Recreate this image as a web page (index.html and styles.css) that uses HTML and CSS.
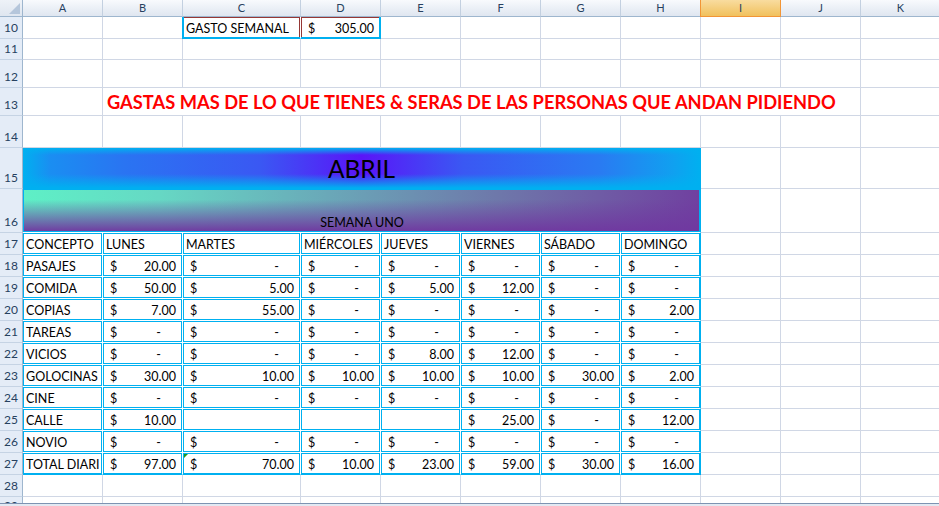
FILE: index.html
```html
<!DOCTYPE html>
<html lang="es">
<head>
<meta charset="utf-8">
<title>Gasto semanal</title>
<link rel="stylesheet" href="styles.css">
</head>
<body>
<div class="sheet">
  <div class="colhead">
    <div class="corner"></div>
    <div>A</div><div>B</div><div class="wc">C</div><div>D</div><div>E</div><div>F</div><div>G</div><div>H</div><div class="sel">I</div><div>J</div><div>K</div>
  </div>

  <div class="row"><div class="rh">10</div><div></div><div></div><div class="wc c10">GASTO SEMANAL</div><div class="a d10"><span>$</span><span>305.00</span></div><div></div><div></div><div></div><div></div><div></div><div></div><div></div></div>

  <div class="row h21"><div class="rh">11</div><div></div><div></div><div class="wc"></div><div></div><div></div><div></div><div></div><div></div><div></div><div></div><div></div></div>

  <div class="row h28"><div class="rh">12</div><div></div><div></div><div class="wc"></div><div></div><div></div><div></div><div></div><div></div><div></div><div></div><div></div></div>

  <div class="row h28"><div class="rh">13</div><div></div><div class="title">GASTAS MAS DE LO QUE TIENES &amp; SERAS DE LAS PERSONAS QUE ANDAN PIDIENDO</div><div></div></div>

  <div class="row h32"><div class="rh">14</div><div></div><div></div><div class="wc"></div><div></div><div></div><div></div><div></div><div></div><div></div><div></div><div></div></div>

  <div class="row h41"><div class="rh">15</div><div class="banner">ABRIL</div><div></div><div></div><div></div></div>

  <div class="row h44"><div class="rh">16</div><div class="t e week">SEMANA UNO</div><div></div><div></div><div></div></div>

  <div class="row"><div class="rh">17</div><div class="t">CONCEPTO</div><div class="t">LUNES</div><div class="t wc">MARTES</div><div class="t">MIÉRCOLES</div><div class="t">JUEVES</div><div class="t">VIERNES</div><div class="t">SÁBADO</div><div class="t e">DOMINGO</div><div></div><div></div><div></div></div>

  <div class="row"><div class="rh">18</div><div class="t">PASAJES</div>
    <div class="t a"><span>$</span><span>20.00</span></div>
    <div class="t a wc"><span>$</span><span class="z">-</span></div>
    <div class="t a"><span>$</span><span class="z">-</span></div>
    <div class="t a"><span>$</span><span class="z">-</span></div>
    <div class="t a"><span>$</span><span class="z">-</span></div>
    <div class="t a"><span>$</span><span class="z">-</span></div>
    <div class="t a e"><span>$</span><span class="z">-</span></div>
    <div></div><div></div><div></div></div>

  <div class="row"><div class="rh">19</div><div class="t">COMIDA</div>
    <div class="t a"><span>$</span><span>50.00</span></div>
    <div class="t a wc"><span>$</span><span>5.00</span></div>
    <div class="t a"><span>$</span><span class="z">-</span></div>
    <div class="t a"><span>$</span><span>5.00</span></div>
    <div class="t a"><span>$</span><span>12.00</span></div>
    <div class="t a"><span>$</span><span class="z">-</span></div>
    <div class="t a e"><span>$</span><span class="z">-</span></div>
    <div></div><div></div><div></div></div>

  <div class="row"><div class="rh">20</div><div class="t">COPIAS</div>
    <div class="t a"><span>$</span><span>7.00</span></div>
    <div class="t a wc"><span>$</span><span>55.00</span></div>
    <div class="t a"><span>$</span><span class="z">-</span></div>
    <div class="t a"><span>$</span><span class="z">-</span></div>
    <div class="t a"><span>$</span><span class="z">-</span></div>
    <div class="t a"><span>$</span><span class="z">-</span></div>
    <div class="t a e"><span>$</span><span>2.00</span></div>
    <div></div><div></div><div></div></div>

  <div class="row"><div class="rh">21</div><div class="t">TAREAS</div>
    <div class="t a"><span>$</span><span class="z">-</span></div>
    <div class="t a wc"><span>$</span><span class="z">-</span></div>
    <div class="t a"><span>$</span><span class="z">-</span></div>
    <div class="t a"><span>$</span><span class="z">-</span></div>
    <div class="t a"><span>$</span><span class="z">-</span></div>
    <div class="t a"><span>$</span><span class="z">-</span></div>
    <div class="t a e"><span>$</span><span class="z">-</span></div>
    <div></div><div></div><div></div></div>

  <div class="row"><div class="rh">22</div><div class="t">VICIOS</div>
    <div class="t a"><span>$</span><span class="z">-</span></div>
    <div class="t a wc"><span>$</span><span class="z">-</span></div>
    <div class="t a"><span>$</span><span class="z">-</span></div>
    <div class="t a"><span>$</span><span>8.00</span></div>
    <div class="t a"><span>$</span><span>12.00</span></div>
    <div class="t a"><span>$</span><span class="z">-</span></div>
    <div class="t a e"><span>$</span><span class="z">-</span></div>
    <div></div><div></div><div></div></div>

  <div class="row"><div class="rh">23</div><div class="t">GOLOCINAS</div>
    <div class="t a"><span>$</span><span>30.00</span></div>
    <div class="t a wc"><span>$</span><span>10.00</span></div>
    <div class="t a"><span>$</span><span>10.00</span></div>
    <div class="t a"><span>$</span><span>10.00</span></div>
    <div class="t a"><span>$</span><span>10.00</span></div>
    <div class="t a"><span>$</span><span>30.00</span></div>
    <div class="t a e"><span>$</span><span>2.00</span></div>
    <div></div><div></div><div></div></div>

  <div class="row"><div class="rh">24</div><div class="t">CINE</div>
    <div class="t a"><span>$</span><span class="z">-</span></div>
    <div class="t a wc"><span>$</span><span class="z">-</span></div>
    <div class="t a"><span>$</span><span class="z">-</span></div>
    <div class="t a"><span>$</span><span class="z">-</span></div>
    <div class="t a"><span>$</span><span class="z">-</span></div>
    <div class="t a"><span>$</span><span class="z">-</span></div>
    <div class="t a e"><span>$</span><span class="z">-</span></div>
    <div></div><div></div><div></div></div>

  <div class="row"><div class="rh">25</div><div class="t">CALLE</div>
    <div class="t a"><span>$</span><span>10.00</span></div>
    <div class="t wc"></div>
    <div class="t"></div>
    <div class="t"></div>
    <div class="t a"><span>$</span><span>25.00</span></div>
    <div class="t a"><span>$</span><span class="z">-</span></div>
    <div class="t a e"><span>$</span><span>12.00</span></div>
    <div></div><div></div><div></div></div>

  <div class="row"><div class="rh">26</div><div class="t">NOVIO</div>
    <div class="t a"><span>$</span><span class="z">-</span></div>
    <div class="t a wc"><span>$</span><span class="z">-</span></div>
    <div class="t a"><span>$</span><span class="z">-</span></div>
    <div class="t a"><span>$</span><span class="z">-</span></div>
    <div class="t a"><span>$</span><span class="z">-</span></div>
    <div class="t a"><span>$</span><span class="z">-</span></div>
    <div class="t a e"><span>$</span><span class="z">-</span></div>
    <div></div><div></div><div></div></div>

  <div class="row last"><div class="rh">27</div><div class="t">TOTAL DIARI</div>
    <div class="t a"><span>$</span><span>97.00</span></div>
    <div class="t a wc err"><span>$</span><span>70.00</span></div>
    <div class="t a"><span>$</span><span>10.00</span></div>
    <div class="t a"><span>$</span><span>23.00</span></div>
    <div class="t a"><span>$</span><span>59.00</span></div>
    <div class="t a"><span>$</span><span>30.00</span></div>
    <div class="t a e"><span>$</span><span>16.00</span></div>
    <div></div><div></div><div></div></div>

  <div class="row"><div class="rh">28</div><div></div><div></div><div class="wc"></div><div></div><div></div><div></div><div></div><div></div><div></div><div></div><div></div></div>

  <div class="row"><div class="rh top">29</div><div></div><div></div><div class="wc"></div><div></div><div></div><div></div><div></div><div></div><div></div><div></div><div></div></div>
</div>
<div class="bar"></div>
</body>
</html>
```

FILE: styles.css
```css
* { box-sizing: border-box; }
html, body { margin: 0; padding: 0; background: #fff; }
body {
  width: 939px;
  height: 506px;
  overflow: hidden;
  font-family: Lato, "Open Sans", "Liberation Sans", sans-serif;
  color: #000;
}

.sheet { height: 503px; overflow: hidden; }

.colhead, .row { display: flex; width: 941px; }

/* column header */
.colhead { height: 17px; }
.colhead > div {
  flex: none;
  width: 80px;
  height: 17px;
  border-right: 1px solid #c3d0e0;
  border-bottom: 1px solid #9eb6ce;
  background: linear-gradient(#f8fafd, #dfe6f0);
  font-size: 11px;
  line-height: 15px;
  text-align: center;
  color: #27415f;
}
.colhead > .wc { width: 118px; }
.colhead > .corner {
  width: 23px;
  position: relative;
  border-right-color: #9eb6ce;
  background: linear-gradient(#eef2f8, #dfe6f0);
}
.corner::after {
  content: "";
  position: absolute;
  right: 2px;
  bottom: 2px;
  border-style: solid;
  border-width: 0 0 11px 11px;
  border-color: transparent transparent #b5c6db transparent;
}
.colhead > .sel {
  background: linear-gradient(#f9dc9f, #f1c15d);
  border-right-color: #f29536;
  border-bottom-color: #f29536;
  box-shadow: -1px 0 0 #f29536;
  color: #27415f;
}

/* rows */
.row { height: 22px; }
.row.h21 { height: 21px; }
.row.h28 { height: 28px; }
.row.h32 { height: 32px; }
.row.h41 { height: 41px; }
.row.h44 { height: 44px; }

.row > div {
  flex: none;
  width: 80px;
  height: 100%;
  border-right: 1px solid #d0d7e5;
  border-bottom: 1px solid #d0d7e5;
  display: flex;
  align-items: flex-end;
  padding: 0 2px 2px 3px;
  font-size: 12.5px;
  line-height: 15px;
  white-space: nowrap;
  overflow: hidden;
}
.row > .wc { width: 118px; }

.row > .rh {
  width: 23px;
  background: #e4ecf7;
  border-right-color: #9eb6ce;
  border-bottom-color: #c5d3e4;
  justify-content: center;
  padding: 0 0 3px;
  font-size: 12px;
  color: #27415f;
}
.row > .rh.top { align-items: flex-start; padding: 1px 0 0; }

/* GASTO SEMANAL box */
.row > .c10 {
  border-bottom-color: #00b0f0;
  border-right-color: #fff;
  box-shadow: -1px 0 0 #00b0f0, inset 1px 0 0 #00b0f0, inset 0 -1px 0 #00b0f0,
              inset 0 1px 0 #953735, inset -1px 0 0 #953735;
}
.row > .d10 {
  border-bottom-color: #00b0f0;
  border-right-color: #00b0f0;
  box-shadow: inset -1px 0 0 #00b0f0, inset 0 -1px 0 #00b0f0,
              inset 0 1px 0 #953735, inset 1px 0 0 #953735;
}

/* title */
.row > .title {
  width: 758px;
  overflow: visible;
  color: #ff0000;
  font-weight: 700;
  font-size: 18.3px;
  line-height: 22px;
  padding: 0 0 2px 4px;
}

/* banners */
.row > .banner {
  width: 678px;
  justify-content: center;
  border-right-color: #00b0f0;
  border-bottom-color: #00b0f0;
  font-size: 24.5px;
  line-height: 30px;
  padding: 0 0 4px;
  background:
    linear-gradient(to bottom, rgba(0,176,240,1) 0, rgba(0,176,240,0) 7px, rgba(0,176,240,0) 26px, rgba(0,176,240,1) 100%),
    linear-gradient(to right, #00b0f0 0%, #1a8ef2 4%, #2a74f2 15%, #3a58f3 35%, #5a14f8 50%, #3a58f3 65%, #2a7af2 85%, #10a0f0 96%, #00b0f0 100%);
}

/* table cells */
.row > .t {
  border-right-color: #fff;
  border-bottom-color: #fff;
  box-shadow: inset 0 0 0 1px #00b0f0;
}
.row > .t.e { border-right-color: #00b0f0; }
.row.last > .t { border-bottom-color: #00b0f0; }

.row > .week {
  width: 678px;
  justify-content: center;
  background:
    linear-gradient(to bottom, rgba(112,56,160,0) 0%, rgba(112,56,160,0) 25%, rgba(112,56,160,.6) 70%, rgba(112,56,160,1) 100%),
    linear-gradient(to right, #5ef0c6 0%, #66d8c4 20%, #6aa8b8 45%, #6e78aa 70%, #7040a0 100%);
}

.row > .a { justify-content: space-between; padding: 0 6px 2px 7px; }
.a .z { padding-right: 15px; }

.row > .err { position: relative; }
.err::before {
  content: "";
  position: absolute;
  left: 1px;
  top: 1px;
  border-style: solid;
  border-width: 4px 4px 0 0;
  border-color: #1f9a1f transparent transparent transparent;
}

.bar {
  height: 3px;
  border-top: 1px solid #7d93b2;
  background: #e3e9f2;
}
```
